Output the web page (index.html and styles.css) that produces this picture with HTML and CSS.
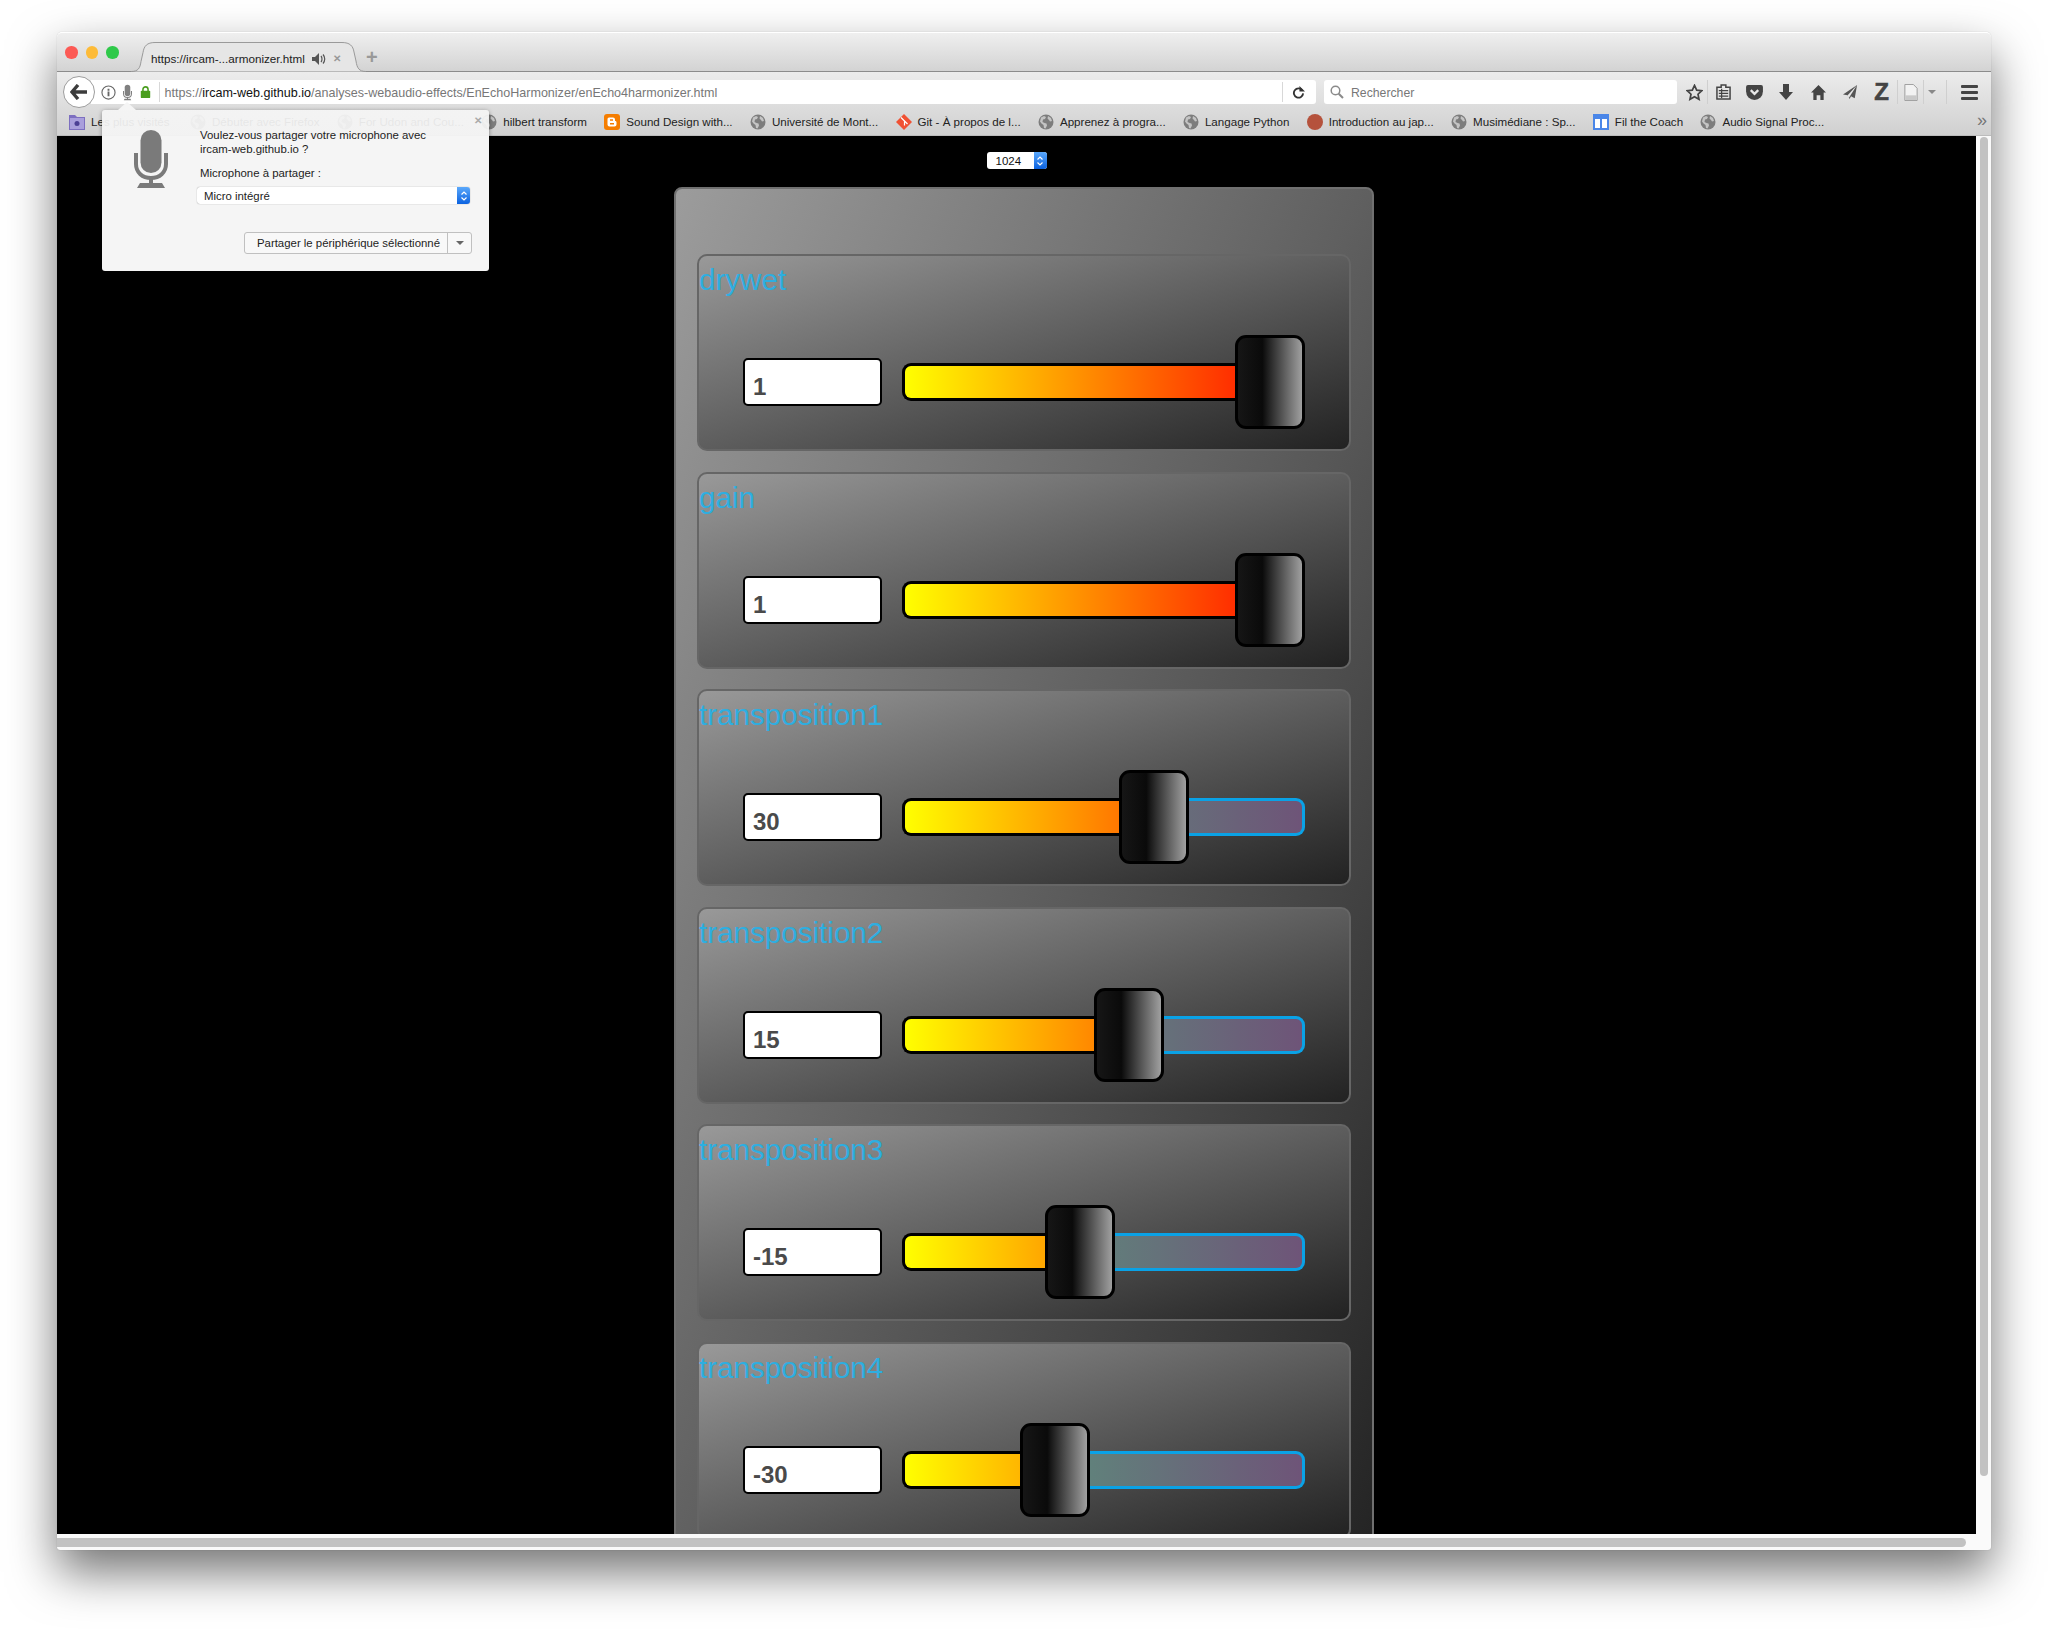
FILE: index.html
```html
<!DOCTYPE html>
<html lang="fr">
<head>
    <meta charset="UTF-8">
    <title>enEcho4harmonizer</title>
    <link rel="stylesheet" href="styles.css">
</head>
<body>
    <svg class="sprite" xmlns="http://www.w3.org/2000/svg">
        <symbol id="globe" viewBox="0 0 16 16">
            <circle cx="8" cy="8" r="7.5" fill="#7d7d7d"/>
            <path d="M3 3.5l3-1.5 2 1-1 2-2 .5-.5 2.5 2 1 2 .5.5 2-1.5 3-1.5-.5-.5-3-2-1.5-1.5-2zM10 2l3 2 1 3-2 .5-1-1.5-1.500-1.500z" fill="#c4c4c4"/>
        </symbol>
        <symbol id="mic" viewBox="0 0 34 58">
            <rect x="6.500" y="0" width="21" height="43" rx="10.500" fill="currentColor"/>
            <path d="M2 23v11c0 8.500 6.500 14 15 14s15-5.500 15-14V23" fill="none" stroke="currentColor" stroke-width="4"/>
            <path d="M15 48h4v5h9l3 5H3l3-5h9z" fill="currentColor"/>
        </symbol>
    </svg>

    <div class="window">
        <div class="tabbar">
            <div class="lights">
                <span class="light red"></span>
                <span class="light yellow"></span>
                <span class="light green"></span>
            </div>
            <div class="tab">
                <svg class="tab-shape" viewBox="0 0 235 30" preserveAspectRatio="none">
                    <path d="M0 29.500c7 0 9-3 10-10l2-9C13 4 16 .5 24 .5h187c8 0 11 3.500 12 9.500l2 9c1 7 3 10.500 10 10.500" fill="#e6e6e6" stroke="#9a9a9a"/>
                </svg>
                <span class="tab-title">https://ircam-...armonizer.html</span>
                <svg class="tab-sound" viewBox="0 0 14 12">
                    <path d="M0 4h3l4-4v12L3 8H0z" fill="#555"/>
                    <path d="M9 3c1.300 1.500 1.300 4.500 0 6M11 1.500c2.300 2.500 2.300 6.500 0 9" fill="none" stroke="#555" stroke-width="1.200"/>
                </svg>
                <span class="tab-close">&#10005;</span>
            </div>
            <span class="new-tab">+</span>
        </div>

        <div class="toolbox">
            <div class="navbar">
                <div class="back">
                    <svg viewBox="0 0 18 16" width="18" height="16">
                        <path d="M8 1L2 8l6 7M2.500 8H17" fill="none" stroke="#3c3c3c" stroke-width="3.400"/>
                    </svg>
                </div>
                <div class="urlbar">
                    <svg class="url-info" viewBox="0 0 16 16" width="15" height="15">
                        <circle cx="8" cy="8" r="7" fill="none" stroke="#666" stroke-width="1.200"/>
                        <path d="M7 7h2v5H7zM7 4h2v2H7z" fill="#666"/>
                    </svg>
                    <svg class="url-mic" width="9" height="17"><use href="#mic"/></svg>
                    <svg class="url-lock" viewBox="0 0 12 14" width="11" height="12">
                        <path d="M3 6V4a3 3 0 0 1 6 0v2" fill="none" stroke="#4a9e1f" stroke-width="1.800"/>
                        <rect x="0.500" y="5.500" width="11" height="8.500" rx="1" fill="#4a9e1f"/>
                    </svg>
                    <span class="url-sep"></span>
                    <span class="url-text">https://<b>ircam-web.github.io</b>/analyses-webaudio-effects/EnEchoHarmonizer/enEcho4harmonizer.html</span>
                    <span class="url-sep reload-sep"></span>
                    <svg class="reload" viewBox="0 0 14 14" width="13" height="13">
                        <path d="M11 4.500A5 5 0 1 0 12 8" fill="none" stroke="#333" stroke-width="2"/>
                        <path d="M8 0v6h6z" fill="#333"/>
                    </svg>
                </div>
                <div class="searchbar">
                    <svg viewBox="0 0 14 14" width="14" height="14">
                        <circle cx="5.500" cy="5.500" r="4.300" fill="none" stroke="#8a8a8a" stroke-width="1.500"/>
                        <path d="M8.700 8.700L13 13" stroke="#8a8a8a" stroke-width="2"/>
                    </svg>
                    <span>Rechercher</span>
                </div>
                <div class="tools">
                    <span class="tool tool-star">
                        <svg viewBox="0 0 18 18" width="17" height="17"><path d="M9 1.500l2.300 5 5.400.6-4 3.700 1.100 5.400L9 13.500l-4.800 2.700 1.100-5.400-4-3.700 5.400-.6z" fill="none" stroke="#444" stroke-width="1.800"/></svg>
                    </span>
                    <span class="tool tool-list">
                        <svg viewBox="0 0 16 17" width="15" height="16"><path d="M1 3.500h4.500V1h5v2.500H15V16H1z" fill="none" stroke="#444" stroke-width="1.600"/><path d="M3 7h10M3 10h10M3 13h10M6 5v10" stroke="#444" stroke-width="1.300"/></svg>
                    </span>
                    <span class="tool">
                        <svg viewBox="0 0 18 16" width="17" height="15"><path d="M2 0h14a2 2 0 0 1 2 2v5a9 9 0 0 1-18 0V2a2 2 0 0 1 2-2z" fill="#444"/><path d="M5 5.500l4 4 4-4" fill="none" stroke="#e8e8e8" stroke-width="2.400"/></svg>
                    </span>
                    <span class="tool">
                        <svg viewBox="0 0 14 16" width="14" height="16"><path d="M4 0h6v8h4l-7 8-7-8h4z" fill="#444"/></svg>
                    </span>
                    <span class="tool">
                        <svg viewBox="0 0 16 16" width="15" height="15"><path d="M8 0l8 8h-2.500v8H10v-5H6v5H2.500V8H0z" fill="#444"/></svg>
                    </span>
                    <span class="tool">
                        <svg viewBox="0 0 16 16" width="15" height="15"><path d="M15 0L0 10l5 1 2 4 1.500-3 4 2z" fill="#555"/><path d="M15 0L5 11l1 3z" fill="#e8e8e8"/></svg>
                    </span>
                    <span class="tool tool-z">Z</span>
                    <span class="tool tool-page">
                        <svg viewBox="0 0 14 18" width="14" height="17"><path d="M.5.500h9l4 4v13H.5z" fill="#f2f2f2" stroke="#9a9a9a"/><path d="M1 12h12v5H1z" fill="#c9c9c9"/></svg>
                    </span>
                    <span class="tool tool-caret"></span>
                    <span class="tool tool-menu"><i></i><i></i><i></i></span>
                </div>
            </div>

            <div class="bookmarks">
                <span class="bookmark first">
                    <svg viewBox="0 0 16 16"><path d="M0 1h6l2 2h8v13H0z" fill="#7d6fc0"/><path d="M1 4h14v11H1z" fill="#a99fdc"/><circle cx="8" cy="9.500" r="2.500" fill="#4b3f94"/></svg>
                    Les plus visités
                </span>
                <span class="bookmark"><svg><use href="#globe"/></svg>Débuter avec Firefox</span>
                <span class="bookmark"><svg><use href="#globe"/></svg>For Udon and Cou...</span>
                <span class="bookmark"><svg><use href="#globe"/></svg>hilbert transform</span>
                <span class="bookmark">
                    <svg viewBox="0 0 16 16"><rect width="16" height="16" rx="3" fill="#f57d00"/><path d="M5 3.500h4a2 2 0 0 1 2 2V7c1 0 1.500.5 1.500 1.500v2a2 2 0 0 1-2 2H5.500a2 2 0 0 1-2-2V5a1.500 1.500 0 0 1 1.500-1.500z" fill="#fff"/><path d="M6 6h3M6 9.800h4" stroke="#f57d00" stroke-width="1.400"/></svg>
                    Sound Design with...
                </span>
                <span class="bookmark"><svg><use href="#globe"/></svg>Université de Mont...</span>
                <span class="bookmark">
                    <svg viewBox="0 0 16 16"><path d="M8 0l8 8-8 8-8-8z" fill="#f05133"/><path d="M5 3.500l3.500 3.500v4.500M8.500 7l3 3" stroke="#fff" stroke-width="1.200" fill="none"/></svg>
                    Git - À propos de l...
                </span>
                <span class="bookmark"><svg><use href="#globe"/></svg>Apprenez à progra...</span>
                <span class="bookmark"><svg><use href="#globe"/></svg>Langage Python</span>
                <span class="bookmark">
                    <svg viewBox="0 0 16 16"><circle cx="8" cy="8" r="8" fill="#b5523c"/></svg>
                    Introduction au jap...
                </span>
                <span class="bookmark"><svg><use href="#globe"/></svg>Musimédiane : Sp...</span>
                <span class="bookmark">
                    <svg viewBox="0 0 16 16"><path d="M0 0h16v16H0z" fill="#4a86e8"/><path d="M2 5h5v9H2zM9 5h5v9H9z" fill="#fff"/></svg>
                    Fil the Coach
                </span>
                <span class="bookmark"><svg><use href="#globe"/></svg>Audio Signal Proc...</span>
                <span class="more">&#187;</span>
            </div>
        </div>

        <div class="content">
            <div class="page">
                <div class="size-row">
                    <div class="size-select">
                        <span>1024</span>
                        <span class="stepper">
                            <svg viewBox="0 0 8 12" width="8" height="12"><path d="M1.500 4.500L4 2l2.500 2.500M1.500 7.500L4 10l2.500-2.500" fill="none" stroke="#fff" stroke-width="1.200"/></svg>
                        </span>
                    </div>
                </div>
                <div class="panel">
                    <div class="card">
                        <div class="card-title">drywet</div>
                        <div class="control">
                            <div class="value">1</div>
                            <div class="slider">
                                <div class="fill" style="width: 333px"></div>
                                <div class="handle"></div>
                            </div>
                        </div>
                    </div>
                    <div class="card">
                        <div class="card-title">gain</div>
                        <div class="control">
                            <div class="value">1</div>
                            <div class="slider">
                                <div class="fill" style="width: 333px"></div>
                                <div class="handle"></div>
                            </div>
                        </div>
                    </div>
                    <div class="card">
                        <div class="card-title">transposition1</div>
                        <div class="control">
                            <div class="value">30</div>
                            <div class="slider">
                                <div class="fill" style="width: 217px"></div>
                                <div class="handle"></div>
                                <div class="rest"></div>
                            </div>
                        </div>
                    </div>
                    <div class="card">
                        <div class="card-title">transposition2</div>
                        <div class="control">
                            <div class="value">15</div>
                            <div class="slider">
                                <div class="fill" style="width: 192px"></div>
                                <div class="handle"></div>
                                <div class="rest"></div>
                            </div>
                        </div>
                    </div>
                    <div class="card">
                        <div class="card-title">transposition3</div>
                        <div class="control">
                            <div class="value">-15</div>
                            <div class="slider">
                                <div class="fill" style="width: 143px"></div>
                                <div class="handle"></div>
                                <div class="rest"></div>
                            </div>
                        </div>
                    </div>
                    <div class="card">
                        <div class="card-title">transposition4</div>
                        <div class="control">
                            <div class="value">-30</div>
                            <div class="slider">
                                <div class="fill" style="width: 118px"></div>
                                <div class="handle"></div>
                                <div class="rest"></div>
                            </div>
                        </div>
                    </div>
                </div>
            </div>
            <div class="vscroll"><div class="vthumb"></div></div>
        </div>
        <div class="hscroll"><div class="hthumb"></div></div>

        <div class="popup">
            <span class="popup-arrow"></span>
            <span class="popup-close">&#10005;</span>
            <svg class="popup-mic" width="34" height="58"><use href="#mic"/></svg>
            <div class="popup-body">
                <p class="popup-question">Voulez-vous partager votre microphone avec<br>ircam-web.github.io ?</p>
                <p class="popup-label">Microphone à partager :</p>
                <div class="popup-select">
                    <span>Micro intégré</span>
                    <span class="stepper">
                        <svg viewBox="0 0 8 12" width="8" height="12"><path d="M1.500 4.500L4 2l2.500 2.500M1.500 7.500L4 10l2.500-2.500" fill="none" stroke="#fff" stroke-width="1.200"/></svg>
                    </span>
                </div>
                <div class="popup-button">
                    <span class="popup-button-text">Partager le périphérique sélectionné</span>
                    <span class="popup-button-drop"></span>
                </div>
            </div>
        </div>
    </div>
</body>
</html>
```

FILE: styles.css
```css
* { box-sizing: border-box; }
html, body { margin: 0; height: 100%; }
body { background-color: #fff; font-family: "Liberation Sans", Arial, sans-serif; padding: 32px 57px 0 57px; overflow: hidden; color: #1c1c1c; }
.sprite { display: none; }

.window { position: relative; width: 1934px; height: 1518px; display: flex; flex-direction: column; background-color: #fafafa; border-radius: 5px 5px 3px 3px; box-shadow: 0 22px 48px rgba(0, 0, 0, 0.55), 0 0 1px rgba(0, 0, 0, 0.3); }

/* tab strip */
.tabbar { height: 40px; flex: none; display: flex; align-items: flex-end; padding-left: 8px; border-radius: 5px 5px 0 0; background: linear-gradient(#efefef, #d3d3d3); border-top: 1px solid #fff; border-bottom: 1px solid #8c8c8c; }
.lights { display: flex; gap: 8px; align-self: flex-start; margin-top: 13px; }
.light { width: 12.500px; height: 12.500px; border-radius: 50%; }
.red { background-color: #fc5a55; }
.yellow { background-color: #fdbb38; }
.green { background-color: #2fc94a; }
.tab { position: relative; width: 235px; height: 30px; margin: 0 0 -1px 12.500px; display: flex; align-items: center; padding: 3px 0 0 20px; font-size: 11.700px; }
.tab-shape { position: absolute; left: 0; top: 0; width: 100%; height: 100%; }
.tab-title, .tab-sound, .tab-close { position: relative; }
.tab-title { color: #222; width: 161px; white-space: nowrap; }
.tab-sound { width: 14px; height: 12px; }
.tab-close { margin-left: 7px; font-size: 10px; font-weight: bold; color: #999; }
.new-tab { font-size: 20px; line-height: 24px; margin: 0 0 2px 0; color: #999; font-weight: bold; }

/* toolbars */
.toolbox { height: 64px; flex: none; background: linear-gradient(#ececec, #d0d0d0); border-bottom: 1px solid #bcbcbc; }
.navbar { height: 40px; display: flex; align-items: center; padding-left: 6px; }
.back { width: 32px; height: 32px; flex: none; display: flex; align-items: center; justify-content: center; border-radius: 50%; background-color: #fff; border: 1px solid #9d9d9d; position: relative; z-index: 1; }
.urlbar { width: 1225px; height: 24px; margin-left: -4px; flex: none; display: flex; align-items: center; background-color: #fff; border-radius: 0 3px 3px 0; }
.url-info { margin-left: 10px; flex: none; }
.url-mic { margin-left: 6.500px; color: #808080; flex: none; }
.url-lock { margin-left: 8px; flex: none; }
.url-sep { width: 1px; height: 20px; margin-left: 8px; background-color: #d8d8d8; flex: none; }
.url-text { margin-left: 5px; padding-top: 2px; font-size: 12.550px; color: #777; white-space: nowrap; flex: 1; }
.url-text b { font-weight: normal; color: #111; }
.reload-sep { margin: 0; }
.reload { margin: 0 11px 0 9px; flex: none; }
.searchbar { width: 353px; height: 24px; margin-left: 8px; flex: none; display: flex; align-items: center; gap: 7px; padding-left: 6px; background-color: #fff; border-radius: 3px; font-size: 12.250px; color: #777; }
.searchbar span { padding-top: 2px; }
.tools { display: flex; align-items: center; height: 24px; margin-left: 5px; }
.tool { width: 32px; height: 24px; display: flex; align-items: center; justify-content: center; flex: none; }
.tool-star { width: 26px; border-right: 1px solid #cfcfcf; }
.tool-list { width: 30px; }
.tool-z { font-size: 24px; font-weight: bold; color: #444; -webkit-text-stroke: 0.6px #444; border-right: 1px solid #cfcfcf; }
.tool-page { width: 26px; border-right: 1px solid #cfcfcf; }
.tool-caret { width: 23px; padding-right: 7px; border-right: 1px solid #cfcfcf; }
.tool-caret::before { content: ""; border: 4px solid transparent; border-top: 4px solid #888; margin-top: 4px; }
.tool-menu { width: 45px; flex-direction: column; gap: 3px; }
.tool-menu i { display: block; width: 17px; height: 3px; border-radius: 1px; background-color: #444; }

.bookmarks { height: 24px; display: flex; align-items: center; gap: 17.300px; padding: 0 0 5px 12px; font-size: 11.600px; white-space: nowrap; color: #222; }
.bookmark { display: flex; align-items: center; gap: 6px; flex: none; }
.bookmark.first { margin-right: 3px; }
.bookmark svg { width: 16px; height: 16px; flex: none; }
.more { position: absolute; right: 4px; top: 78px; font-size: 18px; color: #777; }

/* page */
.content { height: 1398px; flex: none; display: flex; }
.page { width: 1919px; flex: none; overflow: hidden; background-color: #000; }
.size-row { display: flex; justify-content: center; padding-top: 16px; height: 51px; }
.size-select { width: 60px; height: 17px; display: flex; align-items: center; justify-content: space-between; padding-left: 9px; background-color: #fff; border-radius: 3px; font-size: 11.500px; color: #111; overflow: hidden; }
.stepper { width: 13px; height: 100%; display: flex; align-items: center; justify-content: center; background: linear-gradient(#5aa8fb, #0b62e0); }

.panel { width: 700px; height: 1410px; margin-left: 617px; padding: 65px 21px 0; border: 2px solid #707070; border-radius: 8px; background: linear-gradient(to bottom right, #9c9c9c, #222); }
.card { height: 197px; margin-bottom: 20.600px; padding-top: 7px; border: 2px solid #666; border-radius: 10px; background: linear-gradient(to bottom right, #999, #222); }
.card-title { height: 34px; font-size: 29.600px; line-height: 34px; color: #2eaee0; }
.control { display: flex; align-items: center; height: 94px; margin: 38px 0 0 44px; }
.value { width: 139px; height: 48px; padding: 13px 0 0 8px; background-color: #fff; border: 2px solid #000; border-radius: 5px; font-size: 24px; line-height: 28px; font-weight: bold; color: #4a4a4a; }
.slider { width: 403px; height: 94px; margin-left: 20px; display: flex; align-items: center; }
.fill { height: 38px; flex: none; border: 3px solid #000; border-right: none; border-radius: 9px 0 0 9px; background: linear-gradient(to right, #ffff00, #ff0000) no-repeat 0 0 / 403px 100%; }
.handle { width: 70px; height: 94px; flex: none; border: 3px solid #000; border-radius: 11px; background: linear-gradient(to right, #161616, #0a0a0a 38%, #a0a0a0 100%); }
.rest { height: 38px; flex: 1; border: 3px solid #0aa2e6; border-left: none; border-radius: 0 9px 9px 0; background: linear-gradient(to right, #55a87e, #6e5478) no-repeat right 0 / 403px 100%; }

/* scrollbars */
.vscroll { flex: 1; padding: 1px 3px 0 4px; }
.vthumb { height: 1339px; border-radius: 4px; background-color: #c2c2c2; }
.hscroll { flex: 1; padding: 4px 0 0 0; }
.hthumb { width: 1909px; height: 9px; border-radius: 0 5px 5px 0; background-color: #c2c2c2; }

/* microphone permission doorhanger */
.popup { position: absolute; left: 45px; top: 78px; width: 387px; height: 161px; display: flex; background: linear-gradient(rgba(245, 245, 245, 0.93) 26px, #f5f5f5 26px); border-radius: 3px; box-shadow: 0 1px 4px rgba(0, 0, 0, 0.4); font-size: 11.400px; color: #1c1c1c; }
.popup-arrow { position: absolute; left: 16px; top: -8px; width: 0; height: 0; border: 9px solid transparent; border-top: none; border-bottom: 8px solid #f5f5f5; }
.popup-close { position: absolute; right: 7px; top: 5px; font-size: 10px; font-weight: bold; color: #aaa; }
.popup-mic { flex: none; margin: 20px 0 0 32px; color: #7a7a7a; }
.popup-body { margin-left: 32px; width: 280px; }
.popup-question { margin: 18px 0 0; line-height: 14px; }
.popup-label { margin: 10px 0 0; line-height: 14px; }
.popup-select { width: 273px; height: 17px; margin: 7px 0 0 -3px; display: flex; align-items: center; justify-content: space-between; padding-left: 7px; background-color: #fff; border-radius: 3px; box-shadow: 0 0 1px rgba(0, 0, 0, 0.5); overflow: hidden; }
.popup-button { width: 228px; height: 22px; margin: 28px 0 0 44px; display: flex; align-items: center; border: 1px solid #c0c0c0; border-radius: 3px; background-color: #f8f8f8; }
.popup-button-text { width: 203px; padding-left: 5px; text-align: center; border-right: 1px solid #c0c0c0; line-height: 20px; }
.popup-button-drop { margin-left: 8px; margin-top: 4px; border: 4px solid transparent; border-top: 4px solid #666; }
```
